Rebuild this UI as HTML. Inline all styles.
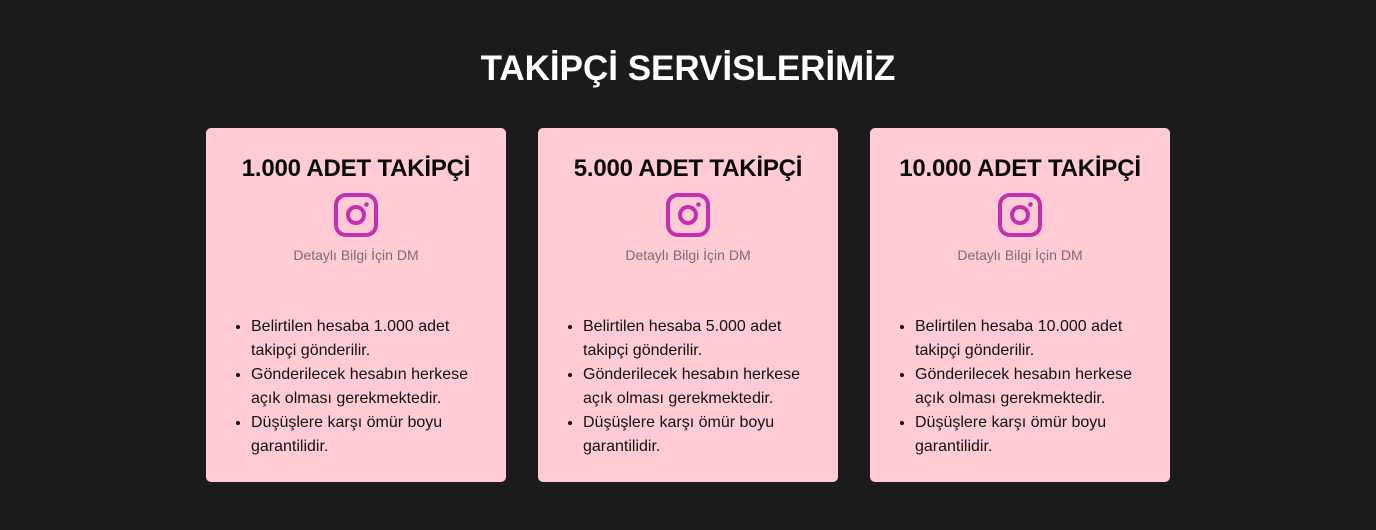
<!DOCTYPE html>
<html><head><meta charset="utf-8"><style>
*{margin:0;padding:0;box-sizing:border-box}
body{width:1376px;height:530px;background:#1b1b1b;font-family:"Liberation Sans",sans-serif;overflow:hidden;position:relative}
h1{position:absolute;top:47px;left:0;width:1376px;text-align:center;color:#fff;font-size:35px;font-weight:bold;line-height:44px}
.card{position:absolute;top:128px;width:300px;height:354px;background:#ffccd5;border-radius:5px}
.card h2{position:absolute;width:100%;text-align:center;font-size:24px;font-weight:bold;color:#0a0a0a;line-height:30px;top:26px;letter-spacing:-0.2px}
.card svg{position:absolute;left:128px;top:65px}
.card .dm{position:absolute;top:117px;width:100%;text-align:center;font-size:14px;color:#7f6b73;line-height:20px}
.card ul{position:absolute;top:187px;left:45px;font-size:16px;line-height:24px;color:#111;list-style:disc}
</style></head><body>
<h1>TAKİPÇİ SERVİSLERİMİZ</h1>
<div class="card" style="left:206px"><h2>1.000 ADET TAKİPÇİ</h2>
<svg width="44" height="44" viewBox="0 0 44 44"><rect x="2" y="2" width="40" height="40" rx="10" fill="none" stroke="#c42eb0" stroke-width="4"/><circle cx="22" cy="22" r="8" fill="none" stroke="#c42eb0" stroke-width="4"/><circle cx="32.5" cy="11.5" r="2.3" fill="#c42eb0"/></svg>
<div class="dm">Detaylı Bilgi İçin DM</div>
<ul><li>Belirtilen hesaba 1.000 adet<br>takipçi gönderilir.</li><li>Gönderilecek hesabın herkese<br>açık olması gerekmektedir.</li><li>Düşüşlere karşı ömür boyu<br>garantilidir.</li></ul></div>
<div class="card" style="left:538px"><h2>5.000 ADET TAKİPÇİ</h2>
<svg width="44" height="44" viewBox="0 0 44 44"><rect x="2" y="2" width="40" height="40" rx="10" fill="none" stroke="#c42eb0" stroke-width="4"/><circle cx="22" cy="22" r="8" fill="none" stroke="#c42eb0" stroke-width="4"/><circle cx="32.5" cy="11.5" r="2.3" fill="#c42eb0"/></svg>
<div class="dm">Detaylı Bilgi İçin DM</div>
<ul><li>Belirtilen hesaba 5.000 adet<br>takipçi gönderilir.</li><li>Gönderilecek hesabın herkese<br>açık olması gerekmektedir.</li><li>Düşüşlere karşı ömür boyu<br>garantilidir.</li></ul></div>
<div class="card" style="left:870px"><h2>10.000 ADET TAKİPÇİ</h2>
<svg width="44" height="44" viewBox="0 0 44 44"><rect x="2" y="2" width="40" height="40" rx="10" fill="none" stroke="#c42eb0" stroke-width="4"/><circle cx="22" cy="22" r="8" fill="none" stroke="#c42eb0" stroke-width="4"/><circle cx="32.5" cy="11.5" r="2.3" fill="#c42eb0"/></svg>
<div class="dm">Detaylı Bilgi İçin DM</div>
<ul><li>Belirtilen hesaba 10.000 adet<br>takipçi gönderilir.</li><li>Gönderilecek hesabın herkese<br>açık olması gerekmektedir.</li><li>Düşüşlere karşı ömür boyu<br>garantilidir.</li></ul></div>
</body></html>
